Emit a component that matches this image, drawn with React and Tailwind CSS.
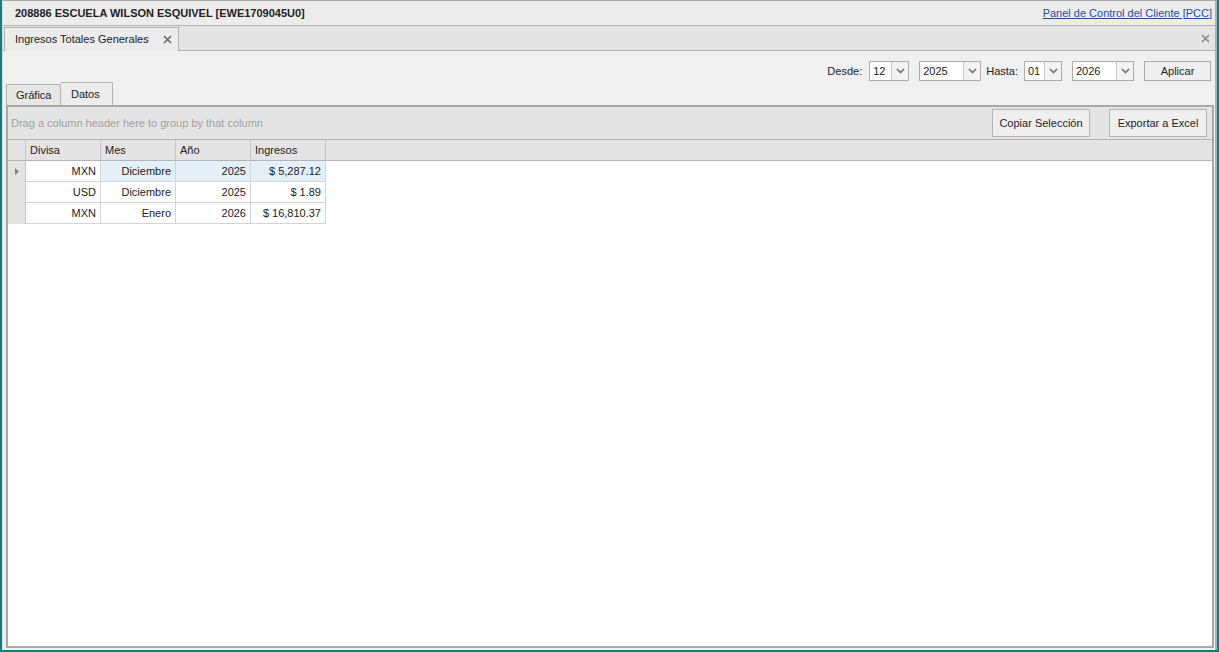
import React from "react";

const font = { fontFamily: '"Liberation Sans", Arial, sans-serif' };

function Chevron() {
  return (
    <svg width="9" height="6" viewBox="0 0 9 6" className="block">
      <path d="M1 1 L4.5 4.5 L8 1" fill="none" stroke="#6e6e6e" strokeWidth="1.6" />
    </svg>
  );
}

function XIcon({ color }) {
  return (
    <svg width="9" height="9" viewBox="0 0 9 9" className="block">
      <path d="M1 1 L8 8 M8 1 L1 8" fill="none" stroke={color} strokeWidth="1.6" />
    </svg>
  );
}

function Combo({ value, w }) {
  return (
    <div className={`flex h-[20px] border border-[#acacac] bg-white ${w}`}>
      <div className="flex-1 pl-[3px] text-[11px] leading-[18px] text-[#222]">{value}</div>
      <div className="flex w-[17px] items-center justify-center border-l border-[#c8c8c8] bg-[#f3f3f3]">
        <Chevron />
      </div>
    </div>
  );
}

const rows = [
  ["MXN", "Diciembre", "2025", "$ 5,287.12"],
  ["USD", "Diciembre", "2025", "$ 1.89"],
  ["MXN", "Enero", "2026", "$ 16,810.37"],
];

export default function App() {
  return (
    <div className="flex h-[652px] w-[1219px] bg-[#127e7e] px-[2px] pb-[2px]" style={font}>
      <div className="flex flex-1 flex-col border-t border-l border-[#a9a9a9] border-l-[#dcdcdc] bg-[#ececec] border-r-2 border-r-[#b0b0b0]">
        {/* title bar */}
        <div className="flex h-[25px] items-center justify-between border-b border-[#b4b4b4] bg-[#ececec] pl-[12px] pr-[3px]">
          <div className="whitespace-nowrap text-[11px] font-bold text-[#222]">208886 ESCUELA WILSON ESQUIVEL [EWE1709045U0]</div>
          <a className="whitespace-nowrap text-[11px] text-[#1f4e9e] underline">Panel de Control del Cliente [PCC]</a>
        </div>
        {/* document tab strip */}
        <div className="flex h-[25px] items-end justify-between border-b border-[#b4b4b4] bg-[#e4e4e4] pl-[1px]">
          <div className="-mb-px flex h-[24px] w-[175px] items-center gap-[14px] border border-b-0 border-[#b4b4b4] bg-[#ececec] pl-[10px]">
            <span className="whitespace-nowrap text-[11px] text-[#222]">Ingresos Totales Generales</span>
            <XIcon color="#666" />
          </div>
          <div className="mb-[7px] mr-[5px]">
            <XIcon color="#8a8a8a" />
          </div>
        </div>
        {/* content */}
        <div className="flex flex-1 flex-col bg-[#f0f0f0] pl-[3px] pr-[1px] pb-[2px]">
          <div className="flex h-[30px] items-end justify-end gap-[10px] pr-[3px]">
            <div className="flex items-center gap-[7px]">
              <span className="text-[11px] text-[#222]">Desde:</span>
              <Combo value="12" w="w-[40px]" />
            </div>
            <div className="flex items-center gap-[5px]">
              <Combo value="2025" w="w-[62px]" />
              <span className="text-[11px] text-[#222]">Hasta:</span>
              <div className="ml-[1px]"><Combo value="01" w="w-[38px]" /></div>
            </div>
            <Combo value="2026" w="w-[62px]" />
            <button className="h-[20px] w-[67px] border border-[#acacac] bg-[#efefef] text-[11px] text-[#222]">Aplicar</button>
          </div>
          {/* tabs */}
          <div className="mt-[1px] flex h-[23px] items-end">
            <div className="flex h-[21px] w-[55px] items-center border border-b-0 border-[#b4b4b4] bg-[#e6e6e6] pl-[9px] text-[11px] text-[#222]">Gráfica</div>
            <div className="flex h-[23px] w-[52px] items-center border border-b-0 border-l-0 border-[#b4b4b4] bg-[#ececec] pl-[10px] text-[11px] text-[#222]">Datos</div>
          </div>
          {/* grid */}
          <div className="flex flex-1 flex-col border-2 border-[#a9a9a9] bg-white">
            <div className="flex h-[33px] items-center justify-between border-b border-[#b4b4b4] bg-[#e4e4e4] pl-[3px] pr-[5px]">
              <span className="text-[11px] text-[#a0a0a0]">Drag a column header here to group by that column</span>
              <div className="flex gap-[19px]">
                <button className="h-[28px] w-[98px] border border-[#b4b4b4] bg-[#efefef] text-[11px] text-[#222]">Copiar Selección</button>
                <button className="h-[28px] w-[98px] border border-[#b4b4b4] bg-[#efefef] text-[11px] text-[#222]">Exportar a Excel</button>
              </div>
            </div>
            <div className="flex h-[21px] border-b border-[#b4b4b4] bg-[#e4e4e4] text-[11px] text-[#222]">
              <div className="w-[18px] border-r border-[#c4c4c4]" />
              {["Divisa", "Mes", "Año", "Ingresos"].map((h) => (
                <div key={h} className="w-[75px] border-r border-[#c4c4c4] pl-[4px] leading-[20px]">{h}</div>
              ))}
            </div>
            <div className="flex flex-1">
              <div className="flex flex-col">
                {rows.map((r, i) => (
                  <div key={i} className="flex h-[21px]">
                    <div className="flex w-[18px] items-center justify-center border-r border-[#c4c4c4] bg-[#e4e4e4]">
                      {i === 0 && (
                        <svg width="4" height="7" viewBox="0 0 4 7"><path d="M0 0 L4 3.5 L0 7 Z" fill="#808080" /></svg>
                      )}
                    </div>
                    {r.map((c, j) => (
                      <div
                        key={j}
                        className={`w-[75px] border-r border-b border-[#d4d4d4] pr-[4px] text-right text-[11px] leading-[20px] text-[#222] ${
                          i === 0 && j > 0 ? "bg-[#e3eff9]" : "bg-white"
                        }`}
                      >
                        {c}
                      </div>
                    ))}
                  </div>
                ))}
              </div>
            </div>
          </div>
        </div>
      </div>
    </div>
  );
}
